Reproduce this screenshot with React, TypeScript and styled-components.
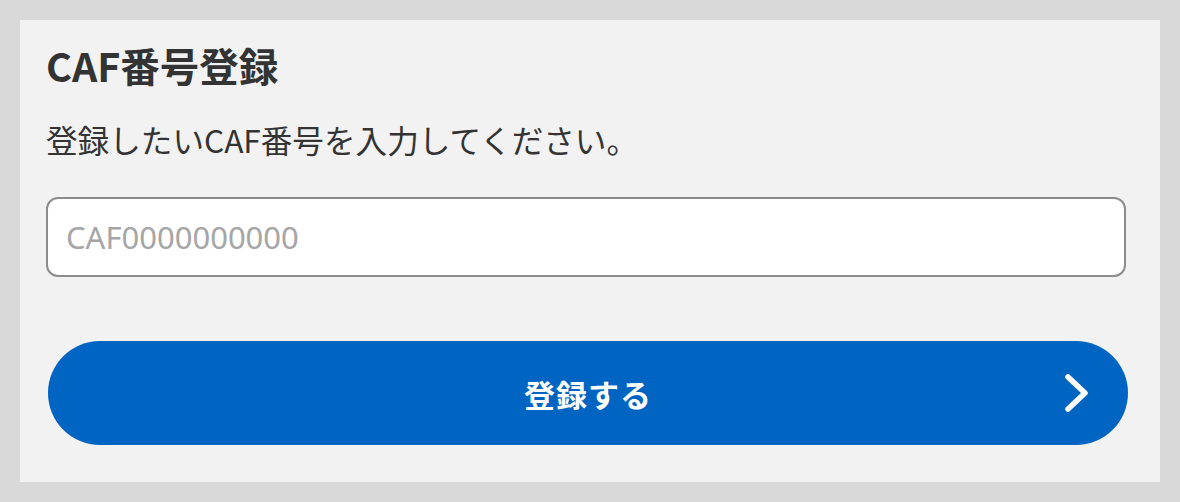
import React from "react";
import styled, { createGlobalStyle } from "styled-components";

const GlobalStyle = createGlobalStyle`
  html, body {
    margin: 0;
    padding: 0;
    background: #d9d9d9;
  }
  body {
    padding: 20px;
    font-family: "Noto Sans CJK JP", "Noto Sans", sans-serif;
    color: #333333;
  }
  * {
    box-sizing: border-box;
  }
`;

const Panel = styled.section`
  width: 1140px;
  height: 462px;
  background: #f2f2f2;
  padding: 17px 32px 0 26px;
  display: flex;
  flex-direction: column;
`;

const Title = styled.h1`
  margin: 0;
  font-size: 39.5px;
  font-weight: 700;
  line-height: 56px;
  color: #333333;
`;

const Lead = styled.p`
  margin: 24px 0 0;
  font-size: 31.6px;
  font-weight: 400;
  line-height: 44px;
  color: #333333;
`;

const Field = styled.input`
  margin: 36px 0 0;
  width: 1080px;
  height: 80px;
  border: 2px solid #8c8c8c;
  border-radius: 12px;
  background: #ffffff;
  padding: 0 18px;
  font-family: "Noto Sans", sans-serif;
  font-size: 31px;
  color: #333333;
  outline: none;

  &::placeholder {
    color: #a6a6a6;
  }
`;

const SubmitButton = styled.button`
  margin: 64px 0 0 2px;
  width: 1080px;
  height: 104px;
  border: none;
  border-radius: 52px;
  background: #0064c2;
  color: #ffffff;
  font-family: "Noto Sans CJK JP", sans-serif;
  font-size: 31px;
  font-weight: 700;
  letter-spacing: 1px;
  position: relative;
  display: flex;
  align-items: center;
  justify-content: center;
  cursor: pointer;
`;

const Chevron = styled.svg`
  position: absolute;
  right: 38px;
  top: 50%;
  transform: translateY(-50%);
`;

export default function App() {
  return (
    <>
      <GlobalStyle />
      <Panel>
        <Title>CAF番号登録</Title>
        <Lead>登録したいCAF番号を入力してください。</Lead>
        <Field type="text" placeholder="CAF0000000000" />
        <SubmitButton type="button">
          登録する
          <Chevron width="26" height="38" viewBox="0 0 26 38" fill="none">
            <path
              d="M4 3 L21 19 L4 35"
              stroke="#ffffff"
              strokeWidth="5.5"
              strokeLinecap="round"
              strokeLinejoin="round"
            />
          </Chevron>
        </SubmitButton>
      </Panel>
    </>
  );
}
